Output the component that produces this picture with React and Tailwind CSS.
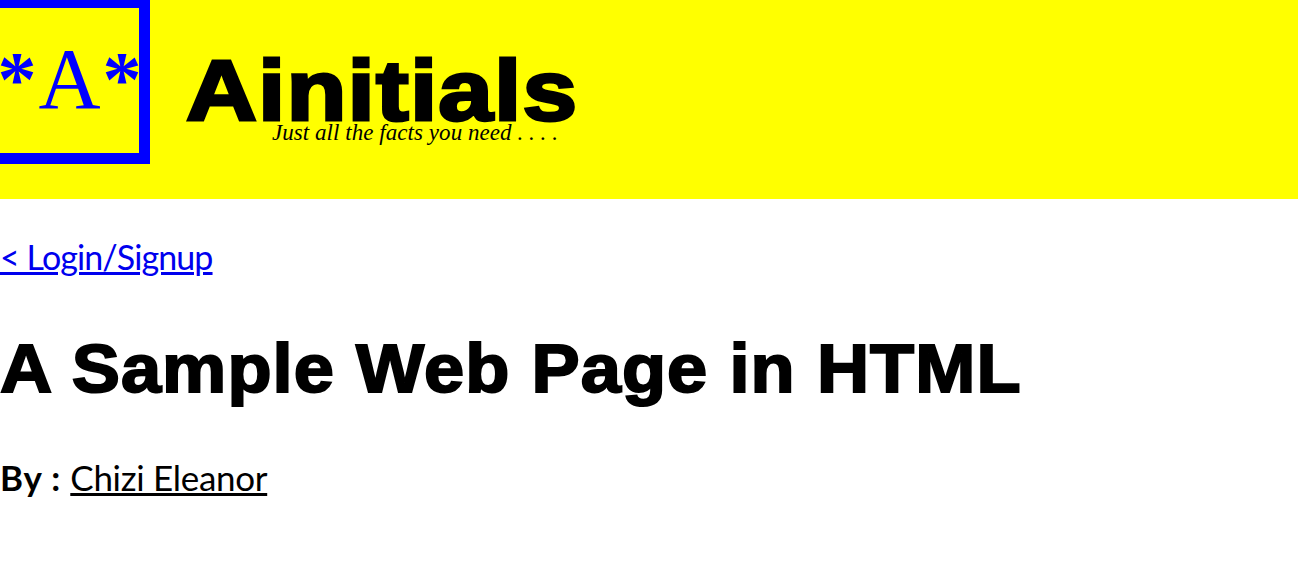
import React from 'react';

const App = () => {
  return (
    <div className="bg-white min-h-[576px] overflow-hidden text-black">
      <header className="h-[199px] bg-[#ffff00] flex items-start">
        <div className="w-[150px] h-[164px] border-t-[8px] border-r-[11px] border-b-[11px] border-[#0000ff] flex items-center justify-center shrink-0 overflow-hidden">
          <span className="font-['Liberation_Serif',serif] text-[#0000ff] text-[86px] leading-none whitespace-nowrap mt-[-3px]">
            <b className="text-[78px] mx-[2px] align-[3px]">*</b>A<b className="text-[78px] mx-[2px] align-[3px]">*</b>
          </span>
        </div>
        <div className="ml-9 mt-[41px] relative">
          <h1 className="font-['Liberation_Sans',sans-serif] font-bold text-[85px] leading-[100px] tracking-[1px] origin-left scale-x-[1.155] [-webkit-text-stroke:3px_black] whitespace-nowrap">Ainitials</h1>
          <p className="absolute left-[86px] top-[80px] font-['Liberation_Serif',serif] italic text-[23px] leading-none tracking-[0.05px] whitespace-nowrap">Just all the facts you need . . . .</p>
        </div>
      </header>
      <main className="font-['Lato',sans-serif]">
        <a href="#" className="block w-fit mt-[40px] text-[34px] leading-[36px] tracking-[-0.9px] text-[#0000ee] underline decoration-[3px]">&lt; Login/Signup</a>
        <h2 className="mt-[53px] font-['Liberation_Sans',sans-serif] font-bold text-[68px] leading-[80px] tracking-[1px] origin-left scale-x-[1.062] [-webkit-text-stroke:2px_black] whitespace-nowrap">A Sample Web Page in HTML</h2>
        <p className="mt-[49px] text-[35px] leading-[40px]">
          <b className="tracking-[0.8px]">By : </b>
          <a href="#" className="underline decoration-[3px] tracking-[-0.3px]">Chizi Eleanor</a>
        </p>
      </main>
    </div>
  );
};

export default App;
